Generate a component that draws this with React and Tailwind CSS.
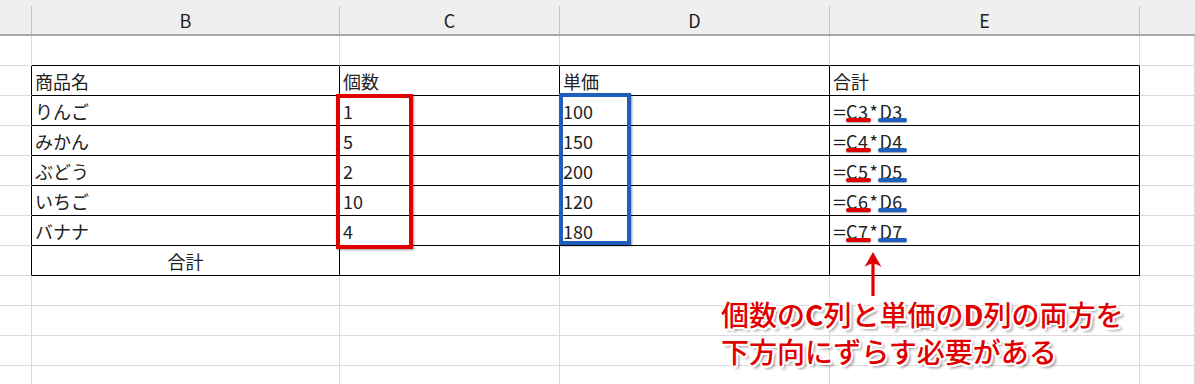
const FONT = "font-['Noto_Sans_CJK_JP','Noto_Sans',sans-serif]";

const HEAD = ["", "B", "C", "D", "E", ""];

// spreadsheet body: one blank row, the bordered table, then empty rows
const BODY = [
  { kind: "blank" },
  { kind: "table", cells: ["商品名", "個数", "単価", "合計"] },
  { kind: "table", cells: ["りんご", "1", "100", { r: 3 }] },
  { kind: "table", cells: ["みかん", "5", "150", { r: 4 }] },
  { kind: "table", cells: ["ぶどう", "2", "200", { r: 5 }] },
  { kind: "table", cells: ["いちご", "10", "120", { r: 6 }] },
  { kind: "table", cells: ["バナナ", "4", "180", { r: 7 }] },
  { kind: "table", total: true, cells: ["合計", "", "", ""] },
  { kind: "blank" },
  { kind: "blank" },
  { kind: "blank" },
  { kind: "blank" },
];

function Formula({ r }) {
  return (
    <span className="relative inline-flex items-center tracking-[0.5px]">
      <span className="inline-block w-[13px] origin-left scale-x-[1.3]">=</span>
      <span className="relative">
        C{r}
        <span className="absolute left-[0px] right-[-3px] top-[calc(100%-2px)] h-[4px] rounded-full bg-[#e00000] shadow-[0_1px_1px_rgba(0,0,0,0.35)]" />
      </span>
      <span className="mx-[1px]">*</span>
      <span className="relative">
        D{r}
        <span className="absolute left-[-1px] right-[-4px] top-[calc(100%-2px)] h-[4px] rounded-full bg-[#1e5fbe] shadow-[0_1px_1px_rgba(0,0,0,0.35)]" />
      </span>
    </span>
  );
}

function BodyRow({ row, index }) {
  const isTable = row.kind === "table";
  const nextIsTable = BODY[index + 1] && BODY[index + 1].kind === "table";
  const out = [];
  for (let c = 0; c < 6; c++) {
    const inTable = isTable && c >= 1 && c <= 4;
    // right edge is black on the table's left rule (col A) and inside the table
    const rightBlack = isTable && c <= 4;
    // bottom edge is black for table cells and for the row sitting above the table
    const bottomBlack = inTable || (nextIsTable && c >= 1 && c <= 4);
    const rb = rightBlack ? "border-r-black" : "border-r-[#dadada]";
    const bb = bottomBlack ? "border-b-black" : "border-b-[#dadada]";
    let content = null;
    if (inTable) {
      const v = row.cells[c - 1];
      content = typeof v === "object" ? <Formula r={v.r} /> : v;
    }
    const centered = row.total && c === 1;
    out.push(
      <div
        key={c}
        className={`h-[30px] border-r border-b ${rb} ${bb} flex items-center ${centered ? "justify-center" : "pl-[3px]"} text-[18px] leading-none text-[#222]`}
      >
        {content}
      </div>
    );
  }
  return out;
}

function Arrow() {
  return (
    <svg
      className="absolute left-[864px] top-[252px]"
      width="18"
      height="45"
      viewBox="0 0 18 45"
    >
      <path
        d="M9 0 L17.5 15 Q13 12 10.6 12 L10.6 44 L7.4 44 L7.4 12 Q5 12 0.5 15 Z"
        fill="#e00000"
      />
    </svg>
  );
}

export default function App() {
  return (
    <div className={`relative w-[1195px] h-[384px] overflow-hidden bg-white ${FONT}`}>
      {/* column letters */}
      <div className="grid grid-cols-[32px_308px_220px_270px_310px_1fr] bg-[#efefef] border-b-2 border-b-[#a9a9a9] h-[36px] pt-[6px]">
        {HEAD.map((h, i) => (
          <div
            key={i}
            className={`h-[28px] ${i < 5 ? "border-r border-r-[#c4c4c4]" : ""} flex items-center justify-center text-[18px] leading-none text-[#222]`}
          >
            {h}
          </div>
        ))}
      </div>

      {/* cells */}
      <div className="grid grid-cols-[32px_308px_220px_270px_310px_1fr]">
        {BODY.map((row, i) => (
          <BodyRow key={i} row={row} index={i} />
        ))}
      </div>

      {/* range outlines */}
      <div className="absolute left-[336px] top-[94px] w-[77px] h-[155px] border-[4px] border-[#e00000] shadow-[1px_1px_2px_rgba(0,0,0,0.4)]" />
      <div className="absolute left-[559px] top-[93px] w-[72px] h-[152px] border-[4px] border-[#1e5fbe] shadow-[1px_1px_2px_rgba(0,0,0,0.4)]" />

      <Arrow />

      {/* note */}
      <div className="absolute left-[721px] top-[296px] text-[28px] leading-[37px] font-medium text-[#e00000] whitespace-nowrap [text-shadow:-1.5px_-1.5px_0_#fff,1.5px_-1.5px_0_#fff,-1.5px_1.5px_0_#fff,1.5px_1.5px_0_#fff,0_2px_0_#fff,2px_0_0_#fff,-2px_0_0_#fff,0_-2px_0_#fff,3px_3px_3px_rgba(0,0,0,0.45)]">
        <div>
          個数の<span className="font-bold">C</span>列と単価の<span className="font-bold">D</span>列の両方を
        </div>
        <div>下方向にずらす必要がある</div>
      </div>
    </div>
  );
}
